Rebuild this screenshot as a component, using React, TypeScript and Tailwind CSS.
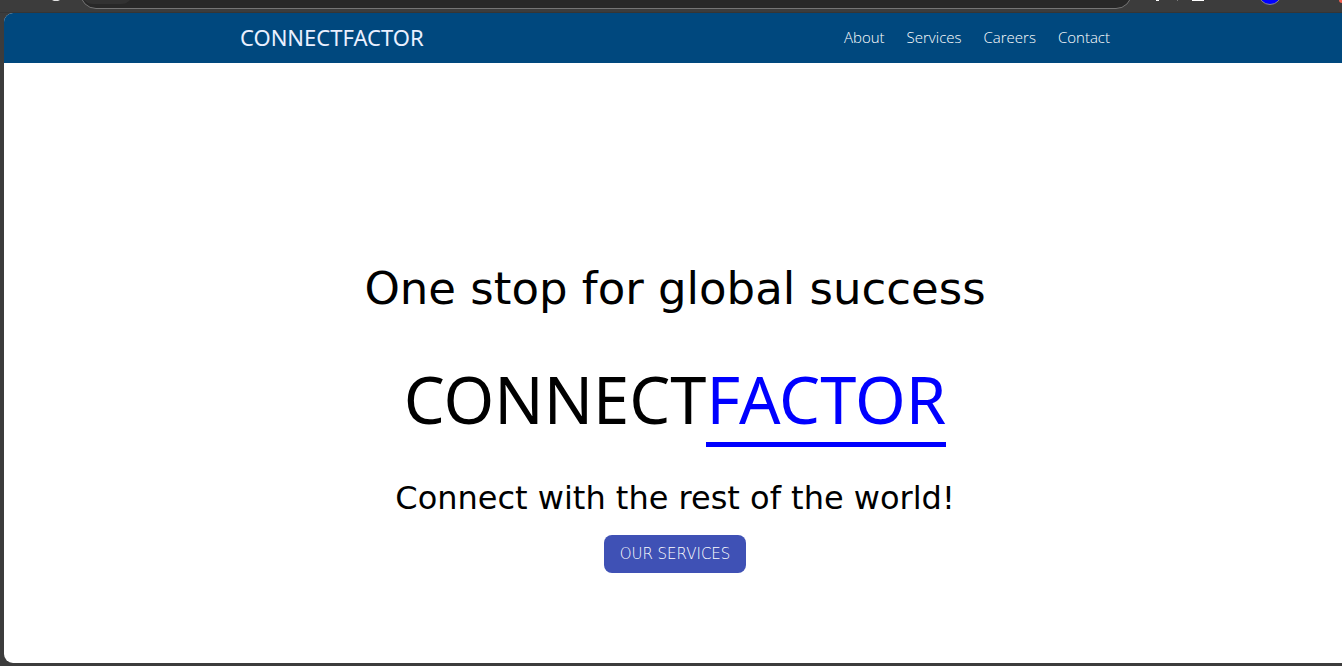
const navItems = ["About", "Services", "Careers", "Contact"];

function BrowserEdge() {
  return (
    <div className="h-[13px] overflow-hidden border-b border-[#353535] bg-[#3c3c3c]" aria-hidden="true">
      <div className="flex h-[9px] items-end overflow-hidden">
        <svg className="h-[9px] w-20 shrink-0" viewBox="0 0 80 9">
          <path d="M52 0h8l-2 1h-4z" fill="#e3e3e3" />
        </svg>
        <div className="flex h-8 w-[1052px] shrink-0 items-end overflow-hidden rounded-full border border-[#757575] bg-[#282828] pb-1">
          <div className="h-6 w-[52px] shrink-0 rounded-full bg-[#323232]" />
          <svg className="mb-[3px] h-1 w-[990px] shrink-0" viewBox="0 0 990 4">
            <path d="M201 0h1v1h-1zM251 0h4v1h-4zM424 0h1v1h-1zM443 0h2v1h-2z" fill="#fff" />
            <path d="M976 0h3v1h-3zM983 0h3v1h-3z" fill="#777" />
          </svg>
        </div>
        <svg className="h-[9px] w-[210px] shrink-0" viewBox="0 0 210 9">
          <path d="M24 0h3v1h-3zM60 0h12v1H60z" fill="#fff" />
          <path d="M45 0h1v1h-1z" fill="#777" />
          <circle cx="138" cy="-7" r="11.5" fill="#00f" stroke="#888" />
          <circle cx="210" cy="0" r="3" fill="#f06050" />
        </svg>
      </div>
    </div>
  );
}

export default function App() {
  return (
    <div className="flex min-h-screen flex-col overflow-hidden bg-[#3c3c3c] font-['DejaVu_Sans',sans-serif]">
      <BrowserEdge />
      <div className="mb-[3px] ml-1 flex w-full grow flex-col overflow-hidden rounded-l-[9px] bg-white">
        <header className="bg-[#00487e] text-white">
          <div className="mx-auto flex h-[50px] w-[870px] max-w-full items-center justify-between pb-0.5">
            <a href="#home" className="font-['Noto_Sans',sans-serif] text-[22px] leading-5 text-[#eaf0ff]">
              CONNECTFACTOR
            </a>
            <nav className="flex gap-[22px] font-['Open_Sans',sans-serif] text-[15px] leading-5 font-light">
              {navItems.map((item) => (
                <a key={item} href={`#${item.toLowerCase()}`}>{item}</a>
              ))}
            </nav>
          </div>
        </header>
        <main className="flex grow flex-col items-center pt-[191px] text-center text-black">
          <h2 className="text-[45px] leading-[70px]">One stop for global success</h2>
          <h1 className="mt-8 font-['Noto_Sans',sans-serif] text-[65px] leading-[86px]">
            CONNECT<span className="inline-block border-b-[5px] border-[#0000ff] text-[#0000ff]">FACTOR</span>
          </h1>
          <p className="mt-[27px] text-[32px] leading-[48px]">Connect with the rest of the world!</p>
          <button type="button" className="mt-[13px] h-[38px] rounded-lg bg-[#3f51b5] px-4 text-[15px] font-extralight text-white">
            OUR SERVICES
          </button>
        </main>
      </div>
    </div>
  );
}
